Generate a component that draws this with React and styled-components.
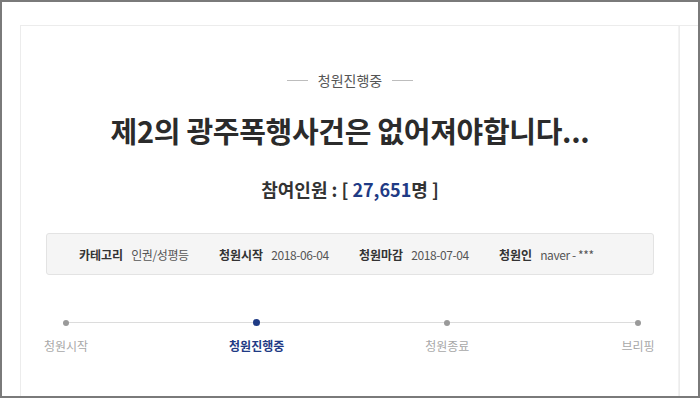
import React from "react";
import styled, { createGlobalStyle } from "styled-components";

const Global = createGlobalStyle`
  html, body { margin: 0; padding: 0; background: #fff; }
  body { font-family: "Noto Sans CJK KR", "Noto Sans", sans-serif; }
  * { box-sizing: border-box; }
`;

const Frame = styled.div`
  width: 700px;
  height: 398px;
  border: 2px solid #7a7a7a;
  background: #fff;
  padding-top: 23px;
  padding-left: 18px;
  overflow: hidden;
`;

const TopRule = styled.div`
  border-top: 1px solid #ececec;
  height: 100%;
`;

const Card = styled.div`
  width: 660px;
  height: 100%;
  border-left: 1px solid #ececec;
  border-right: 1px solid #ececec;
  box-shadow: inset -6px 0 0 -5px #f2f2f2;
  padding: 44px 25px 0 25px;
  display: flex;
  flex-direction: column;
  align-items: center;
`;

const Status = styled.div`
  display: flex;
  align-items: center;
  gap: 10px;
  font-size: 14px;
  line-height: 20px;
  color: #555;
  &::before, &::after {
    content: "";
    width: 21px;
    height: 1px;
    background: #bdbdbd;
  }
`;

const Title = styled.h1`
  margin: 20px 0 0;
  font-size: 29px;
  line-height: 40px;
  font-weight: 700;
  color: #2b2b2b;
  letter-spacing: -0.3px;
`;

const Count = styled.div`
  margin-top: 26px;
  font-size: 18px;
  line-height: 26px;
  font-weight: 700;
  color: #333;
`;

const Num = styled.span`
  color: #1f3b85;
`;

const InfoBox = styled.div`
  margin-top: 31px;
  align-self: stretch;
  height: 42px;
  background: #f5f5f5;
  border: 1px solid #e3e3e3;
  border-radius: 3px;
  display: grid;
  grid-template-columns: repeat(4, 140px);
  align-items: center;
  padding-left: 32px;
`;

const InfoItem = styled.div`
  display: flex;
  align-items: baseline;
  gap: 8px;
  font-size: 12px;
  white-space: nowrap;
`;

const InfoLabel = styled.span`
  font-weight: 700;
  color: #333;
`;

const InfoValue = styled.span`
  color: #555;
  font-size: 12px;
  letter-spacing: -0.4px;
`;

const Timeline = styled.div`
  margin-top: 44px;
  align-self: stretch;
  margin-left: 20px;
  margin-right: 16px;
  position: relative;
  display: flex;
  justify-content: space-between;
  &::before {
    content: "";
    position: absolute;
    left: 0;
    right: 0;
    top: 3px;
    height: 1px;
    background: #dcdcdc;
  }
`;

const Step = styled.div`
  width: 0;
  display: flex;
  flex-direction: column;
  align-items: center;
  position: relative;
`;

const Dot = styled.span`
  width: ${p => (p.$active ? 7 : 6)}px;
  height: ${p => (p.$active ? 7 : 6)}px;
  margin-top: ${p => (p.$active ? 0 : 0.5)}px;
  border-radius: 50%;
  background: ${p => (p.$active ? "#1f3b85" : "#9a9a9a")};
  flex: none;
`;

const StepLabel = styled.span`
  margin-top: ${p => (p.$active ? 11 : 11.5)}px;
  font-size: 12px;
  line-height: 18px;
  white-space: nowrap;
  color: ${p => (p.$active ? "#1f3b85" : "#a8a8a8")};
  font-weight: ${p => (p.$active ? 700 : 400)};
`;

const info = [
  ["카테고리", "인권/성평등"],
  ["청원시작", "2018-06-04"],
  ["청원마감", "2018-07-04"],
  ["청원인", "naver - ***"],
];

const steps = ["청원시작", "청원진행중", "청원종료", "브리핑"];

export default function App() {
  return (
    <>
      <Global />
      <Frame>
        <TopRule>
          <Card>
            <Status>청원진행중</Status>
            <Title>제2의 광주폭행사건은 없어져야합니다...</Title>
            <Count>
              참여인원 : [ <Num>27,651</Num>명 ]
            </Count>
            <InfoBox>
              {info.map(([l, v]) => (
                <InfoItem key={l}>
                  <InfoLabel>{l}</InfoLabel>
                  <InfoValue>{v}</InfoValue>
                </InfoItem>
              ))}
            </InfoBox>
            <Timeline>
              {steps.map((s, i) => (
                <Step key={s}>
                  <Dot $active={i === 1} />
                  <StepLabel $active={i === 1}>{s}</StepLabel>
                </Step>
              ))}
            </Timeline>
          </Card>
        </TopRule>
      </Frame>
    </>
  );
}
